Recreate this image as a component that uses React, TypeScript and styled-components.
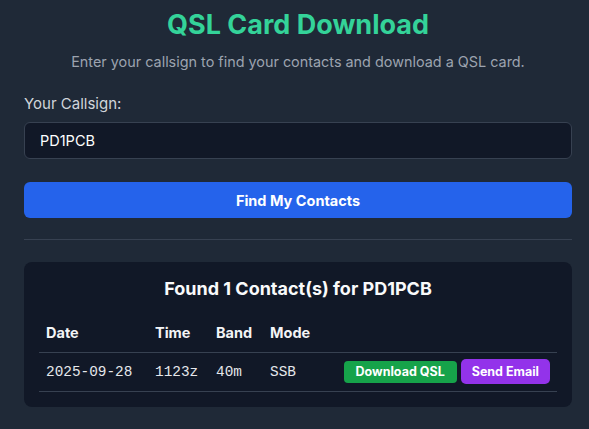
import React, { useState } from "react"
import styled, { createGlobalStyle } from "styled-components"

const GlobalStyle = createGlobalStyle`
  html, body {
    margin: 0;
    padding: 0;
    background: #1f2937;
  }
  body {
    font-family: Inter, "Noto Sans", sans-serif;
    color: #e5e7eb;
  }
`

const Page = styled.div`
  padding: 8px 17px 0 24px;
`

const Container = styled.div`
  width: 548px;
`

const Title = styled.h1`
  margin: 0;
  font-size: 27px;
  line-height: 34px;
  font-weight: 700;
  color: #34d399;
  text-align: center;
`

const Subtitle = styled.p`
  margin: 10px 0 0;
  font-size: 14.4px;
  line-height: 20px;
  color: #9ca3af;
  text-align: center;
`

const Label = styled.label`
  display: block;
  margin-top: 22px;
  font-size: 15px;
  line-height: 20px;
  color: #d1d5db;
`

const Input = styled.input`
  display: block;
  box-sizing: border-box;
  width: 100%;
  height: 37px;
  margin-top: 8px;
  padding: 0 15px;
  background: #111827;
  border: 1px solid #374151;
  border-radius: 6px;
  color: #ffffff;
  font-family: inherit;
  font-size: 14.5px;
  outline: none;
`

const PrimaryButton = styled.button`
  display: block;
  width: 100%;
  height: 36px;
  margin-top: 23px;
  border: 0;
  border-radius: 6px;
  background: #2563eb;
  color: #ffffff;
  font-family: inherit;
  font-size: 14.5px;
  font-weight: 700;
  cursor: pointer;
`

const Divider = styled.hr`
  margin: 21px 0 0;
  border: 0;
  border-top: 1px solid #374151;
`

const Results = styled.section`
  margin-top: 22px;
  padding: 15px;
  background: #111827;
  border-radius: 8px;
`

const ResultsTitle = styled.h2`
  margin: 0 0 13px;
  font-size: 18px;
  line-height: 24px;
  font-weight: 700;
  color: #f9fafb;
  text-align: center;
`

const Table = styled.table`
  width: 100%;
  border-collapse: collapse;
  table-layout: fixed;
`

const Th = styled.th<{ $w?: number }>`
  width: ${({ $w }) => ($w ? `${$w}px` : "auto")};
  padding: 9px 7px;
  font-size: 14.5px;
  line-height: 20px;
  font-weight: 700;
  color: #f3f4f6;
  text-align: left;
  border-bottom: 1px solid #374151;
`

const Td = styled.td<{ $actions?: boolean }>`
  padding: ${({ $actions }) => ($actions ? "6px 7px 7px" : "9px 7px")};
  font-family: "Liberation Mono", "Courier New", monospace;
  font-size: 14.4px;
  line-height: 20px;
  color: #e5e7eb;
  border-bottom: 1px solid #374151;
`

const Actions = styled.div`
  display: flex;
  justify-content: flex-end;
  align-items: center;
  gap: 4px;
`

const SmallButton = styled.button<{ $tone: "green" | "purple" }>`
  box-sizing: border-box;
  height: ${({ $tone }) => ($tone === "green" ? "22px" : "25px")};
  padding: 0 ${({ $tone }) => ($tone === "green" ? "12px" : "11px")};
  border: 0;
  border-radius: ${({ $tone }) => ($tone === "green" ? "4px" : "5px")};
  background: ${({ $tone }) => ($tone === "green" ? "#16a34a" : "#9333ea")};
  color: #ffffff;
  font-family: Inter, sans-serif;
  font-size: 12.5px;
  font-weight: 700;
  white-space: nowrap;
  cursor: pointer;
`

const contacts = [{ date: "2025-09-28", time: "1123z", band: "40m", mode: "SSB" }]

export default function App() {
  const [callsign, setCallsign] = useState("PD1PCB")

  return (
    <Page>
      <GlobalStyle />
      <Container>
        <Title>QSL Card Download</Title>
        <Subtitle>Enter your callsign to find your contacts and download a QSL card.</Subtitle>
        <Label htmlFor="callsign">Your Callsign:</Label>
        <Input id="callsign" value={callsign} onChange={e => setCallsign(e.target.value)} />
        <PrimaryButton>Find My Contacts</PrimaryButton>
        <Divider />
        <Results>
          <ResultsTitle>Found {contacts.length} Contact(s) for PD1PCB</ResultsTitle>
          <Table>
            <thead>
              <tr>
                <Th $w={95}>Date</Th>
                <Th $w={47}>Time</Th>
                <Th $w={40}>Band</Th>
                <Th $w={56}>Mode</Th>
                <Th />
              </tr>
            </thead>
            <tbody>
              {contacts.map((c, i) => (
                <tr key={i}>
                  <Td>{c.date}</Td>
                  <Td>{c.time}</Td>
                  <Td>{c.band}</Td>
                  <Td>{c.mode}</Td>
                  <Td $actions>
                    <Actions>
                      <SmallButton $tone="green">Download QSL</SmallButton>
                      <SmallButton $tone="purple">Send Email</SmallButton>
                    </Actions>
                  </Td>
                </tr>
              ))}
            </tbody>
          </Table>
        </Results>
      </Container>
    </Page>
  )
}
